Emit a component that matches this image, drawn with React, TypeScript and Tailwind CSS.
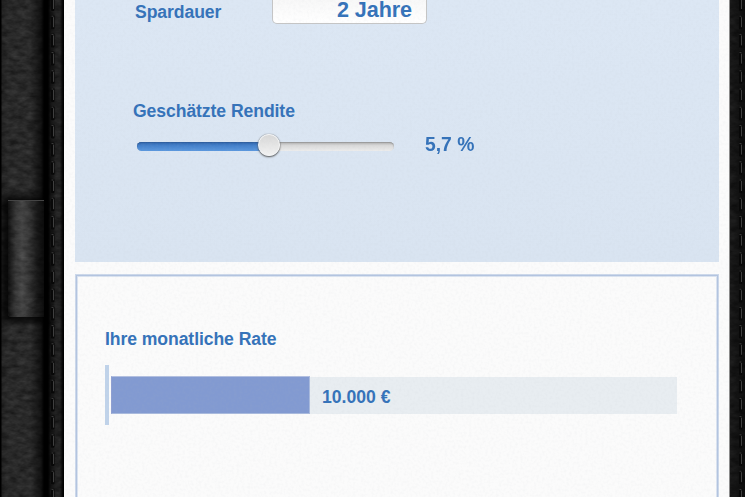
import type { ReactNode } from "react";

const marks = Array.from({ length: 28 }, (_, i) => i * 18.2 - 3);

function Leather({ id, width, height }: { id: string; width: number; height: number }) {
  return (
    <svg className="absolute inset-0" width={width} height={height}>
      <filter id={id} x="0" y="0" width="100%" height="100%" colorInterpolationFilters="sRGB">
        <feTurbulence type="fractalNoise" baseFrequency="0.11 0.2" numOctaves={3} seed={21} />
        <feColorMatrix values="0.15 0.06 0 0 0.055  0.15 0.06 0 0 0.055  0.15 0.06 0 0 0.055  0 0 0 0 1" />
      </filter>
      <rect width={width} height={height} filter={`url(#${id})`} />
    </svg>
  );
}

function Stitches({ className }: { className: string }) {
  return (
    <svg className={`absolute top-0 ${className}`} width={6} height={497}>
      {marks.map((y) => (
        <g key={y}>
          <rect x={1} y={y} width={3.5} height={14} rx={1} fill="#080808" />
          <path d={`M1.5 ${y + 1}h2M3.5 ${y + 2}v10`} stroke="#3f3f3f" strokeWidth={1} fill="none" />
        </g>
      ))}
    </svg>
  );
}

function PaperGrain() {
  return (
    <svg className="pointer-events-none absolute inset-0 h-full w-full">
      <filter id="grain" x="0" y="0" width="100%" height="100%">
        <feTurbulence type="fractalNoise" baseFrequency="0.37" numOctaves={2} seed={3} />
        <feColorMatrix values="0 0 0 0 0.45  0 0 0 0 0.48  0 0 0 0 0.52  0.16 0 0 0 -0.065" />
      </filter>
      <rect width="100%" height="100%" filter="url(#grain)" />
    </svg>
  );
}

function Label({ children }: { children: ReactNode }) {
  return (
    <div className="text-[17.6px] leading-5 font-bold tracking-[-0.08px] whitespace-nowrap">{children}</div>
  );
}

function Cover() {
  return (
    <div className="relative w-16 shrink-0 overflow-hidden bg-[#202020]">
      <Leather id="cover-leather" width={64} height={497} />
      <div className="absolute inset-0 bg-[linear-gradient(to_right,#000_0,#000_1px,#0003_2px,transparent_8px,transparent_30px,#0009_41px,#000_44px,#000_48px,#0008_51px,#0003_56px,#0003_60px,#000_63px)]" />
      <div className="absolute top-[196px] left-0.5 h-[126px] w-[44px] bg-black/80 blur-[3px]" />
      <div className="absolute top-[200px] left-2 h-[117px] w-[36px] overflow-hidden rounded-bl-sm border-t border-[#444] bg-[#2a2a2a]">
        <Leather id="loop-leather" width={36} height={117} />
        <div className="absolute inset-0 bg-[linear-gradient(to_right,#0009_0,#fff1_8px,#fff2_14px,#fff1_20px,#0006_29px,#000b_36px)]" />
      </div>
      <Stitches className="left-[50px]" />
    </div>
  );
}

function Slider({ value }: { value: number }) {
  return (
    <div className="relative h-[9px] w-[257px] rounded-full bg-linear-to-b from-[#b1b1b1] via-[#d9d9d9] via-40% to-[#ececec] shadow-[inset_0_1px_1px_#999]">
      <div
        className="h-full rounded-l-full bg-linear-to-b from-[#2f65ab] via-[#4480ca] via-40% to-[#5b98de] shadow-[inset_0_1px_1px_#2f5f9f]"
        style={{ width: `${value}%` }}
      />
      <div
        className="absolute top-[-8px] size-[22px] -translate-x-1/2 rounded-full border border-[#f5f5f5] bg-linear-to-b from-[#d8d8d8] to-[#f2f2f2] shadow-[0_1px_2px_#555,0_0_1px_#777]"
        style={{ left: `${value}%` }}
      />
    </div>
  );
}

export default function App() {
  return (
    <div className="flex h-[497px] w-[745px] overflow-hidden bg-black font-['Liberation_Sans',Arial,sans-serif] text-[#3472b9]">
      <Cover />
      <main className="relative flex w-[666px] shrink-0 flex-col border-r border-[#8c8c8c] bg-[#fbfbfb] px-[11px]">
        <section className="h-[262px] w-[644px] shrink-0 bg-linear-to-b from-[#dce7f4] to-[#d9e4f1] pl-[58px]">
          <div className="flex h-6 items-start pl-0.5">
            <div className="w-[137px] pt-0.5">
              <Label>Spardauer</Label>
            </div>
            <div className="h-6 w-[155px] rounded-b-[5px] border border-t-0 border-[#c5c5c5] bg-linear-to-b from-[#f8f8f8] to-white pr-3.5 text-right text-[21.6px] leading-[19px] font-bold tracking-[-0.1px]">
              2 Jahre
            </div>
          </div>
          <div className="pt-[77px]">
            <Label>Geschätzte Rendite</Label>
          </div>
          <div className="flex items-center pt-[11px] pl-1">
            <div className="pt-[3px]">
              <Slider value={51.2} />
            </div>
            <div className="mb-0.5 ml-[31px] origin-left scale-x-92 text-[21px] leading-6 font-bold">5,7 %</div>
          </div>
        </section>
        <section className="mt-3 h-[230px] w-[644px] shrink-0 border border-[#ccd8ea] pt-[54px] pl-[29px] shadow-[inset_0_0_0_1px_#b3c4e0,inset_0_0_0_2px_#dae3f0]">
          <Label>Ihre monatliche Rate</Label>
          <div className="mt-4 flex h-[60px] items-center">
            <div className="h-[60px] w-1 bg-[#c0d3ea]" />
            <div className="ml-[1.5px] h-[38px] w-[199px] border border-t-[#b2bfe0] border-r-[#a9badd] border-b-[#a9badd] border-l-[#8f9fd1] bg-[#829ad1]" />
            <div className="mt-px flex h-[37px] w-[367.5px] items-center bg-[#e8edf1] pt-[3px] pl-[12.5px]">
              <span className="text-[17.6px] leading-5 font-bold whitespace-nowrap">10.000 €</span>
            </div>
          </div>
        </section>
        <PaperGrain />
      </main>
      <div className="relative w-[15px] shrink-0 overflow-hidden bg-[#1b1b1b]">
        <Leather id="edge-leather" width={15} height={497} />
        <div className="absolute inset-0 bg-linear-to-r from-black/40 to-black/70" />
        <Stitches className="left-[8px]" />
      </div>
    </div>
  );
}
